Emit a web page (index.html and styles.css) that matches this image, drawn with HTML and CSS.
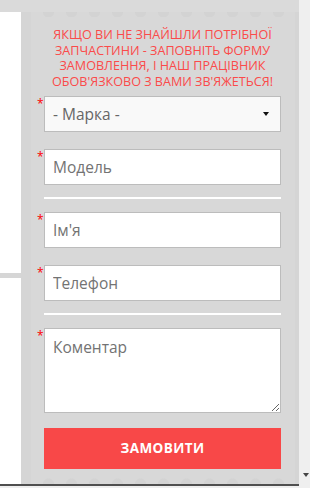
FILE: index.html
```html
<!DOCTYPE html>
<html lang="uk">
<head>
    <meta charset="UTF-8">
    <meta name="viewport" content="width=device-width, initial-scale=1.0">
    <title>Замовлення запчастини</title>
    <link rel="stylesheet" href="styles.css">
</head>
<body>
    <div class="screen">
        <div class="page">
            <div class="side">
                <div class="side-line"></div>
            </div>
            <div class="panel">
                <div class="panel-inner">
                    <p class="intro">Якщо ви не знайшли потрібної запчастини - заповніть форму замовлення, і наш працівник обов'язково з вами зв'яжеться!</p>
                    <form class="order" onsubmit="return false">
                        <div class="row">
                            <span class="req">*</span>
                            <div class="select-wrap">
                                <select class="field select">
                                    <option>- Марка -</option>
                                </select>
                                <span class="caret"></span>
                            </div>
                        </div>
                        <div class="row">
                            <span class="req">*</span>
                            <input class="field" type="text" placeholder="Модель">
                        </div>
                        <hr class="sep">
                        <div class="row">
                            <span class="req">*</span>
                            <input class="field" type="text" placeholder="Ім'я">
                        </div>
                        <div class="row">
                            <span class="req">*</span>
                            <input class="field" type="text" placeholder="Телефон">
                        </div>
                        <hr class="sep">
                        <div class="row">
                            <span class="req">*</span>
                            <textarea class="field comment" placeholder="Коментар"></textarea>
                        </div>
                        <button class="submit" type="submit">Замовити</button>
                    </form>
                </div>
            </div>
        </div>
        <div class="scroll">
            <span class="scroll-arrow"></span>
        </div>
    </div>
</body>
</html>
```

FILE: styles.css
```css
html, body {
    margin: 0;
    padding: 0;
    height: 100%;
}
body {
    font-family: "Open Sans", "Noto Sans", sans-serif;
    background-color: #efefef;
    overflow: hidden;
}
.screen {
    display: flex;
    height: 488px;
}
.page {
    width: 300px;
    height: 486px;
    display: flex;
    padding-top: 12px;
    box-sizing: border-box;
    background-color: #dadada;
    border-bottom: 2px solid #4f4f4f;
}
.side {
    width: 21px;
    background-color: #fff;
    padding-top: 261px;
}
.side-line {
    height: 5px;
    background-color: #d6d6d6;
}
.panel {
    flex: 1;
    background-color: #d5d5d5;
    padding: 0 4px 0 10px;
}
.panel-inner {
    height: 100%;
    box-sizing: border-box;
    padding: 15px 14px 0 0;
    background-color: #d8d8d8;
    background-image:
        radial-gradient(circle at 50% 0, #d3d3d3 5px, transparent 6px),
        radial-gradient(circle at 50% 100%, #d3d3d3 5px, transparent 6px);
    background-size: 23px 5px, 23px 6px;
    background-position: 6px 0, 6px 100%;
    background-repeat: repeat-x;
}
.intro {
    margin: 0 0 6px 13px;
    color: #fb4a4a;
    font-size: 12.6px;
    line-height: 15.7px;
    text-transform: uppercase;
    text-align: center;
}
.order {
    display: flex;
    flex-direction: column;
}
.row {
    display: flex;
    margin-bottom: 17px;
}
.req {
    width: 13px;
    padding-left: 6px;
    box-sizing: border-box;
    color: #f00;
    font-size: 12px;
    line-height: 1;
    margin-top: 2px;
}
.field {
    flex: 1;
    width: 100%;
    height: 36px;
    box-sizing: border-box;
    margin: 0;
    padding: 0 8px;
    border: 1px solid #bcbcbc;
    border-radius: 0;
    background-color: #fff;
    font-family: inherit;
    font-size: 15.5px;
    color: #666;
    outline: none;
}
.field::placeholder {
    color: #737373;
    opacity: 1;
}
.select-wrap {
    flex: 1;
    display: flex;
    position: relative;
}
.select {
    appearance: none;
    -webkit-appearance: none;
    background-color: #f9f9f9;
}
.caret {
    position: absolute;
    right: 12px;
    top: 16px;
    border-left: 3px solid transparent;
    border-right: 3px solid transparent;
    border-top: 4px solid #111;
    pointer-events: none;
}
.comment {
    height: 85px;
    padding-top: 7px;
    resize: vertical;
}
.sep {
    margin: -5px 0 13px 13px;
    border: none;
    height: 2px;
    background-color: #fff;
}
.row + .sep + .row {
    margin-bottom: 17px;
}
.submit {
    margin: -2px 0 0 13px;
    height: 41px;
    border: none;
    background-color: #f84848;
    color: #fff;
    font-family: inherit;
    font-weight: 700;
    font-size: 13.5px;
    letter-spacing: 0.4px;
    text-transform: uppercase;
    cursor: pointer;
}
.scroll {
    width: 10px;
    display: flex;
    flex-direction: column;
    justify-content: flex-end;
    align-items: flex-end;
    padding-bottom: 11px;
    padding-right: 1px;
}
.scroll-arrow {
    border-left: 3px solid transparent;
    border-right: 3px solid transparent;
    border-top: 4px solid #444;
}
```
